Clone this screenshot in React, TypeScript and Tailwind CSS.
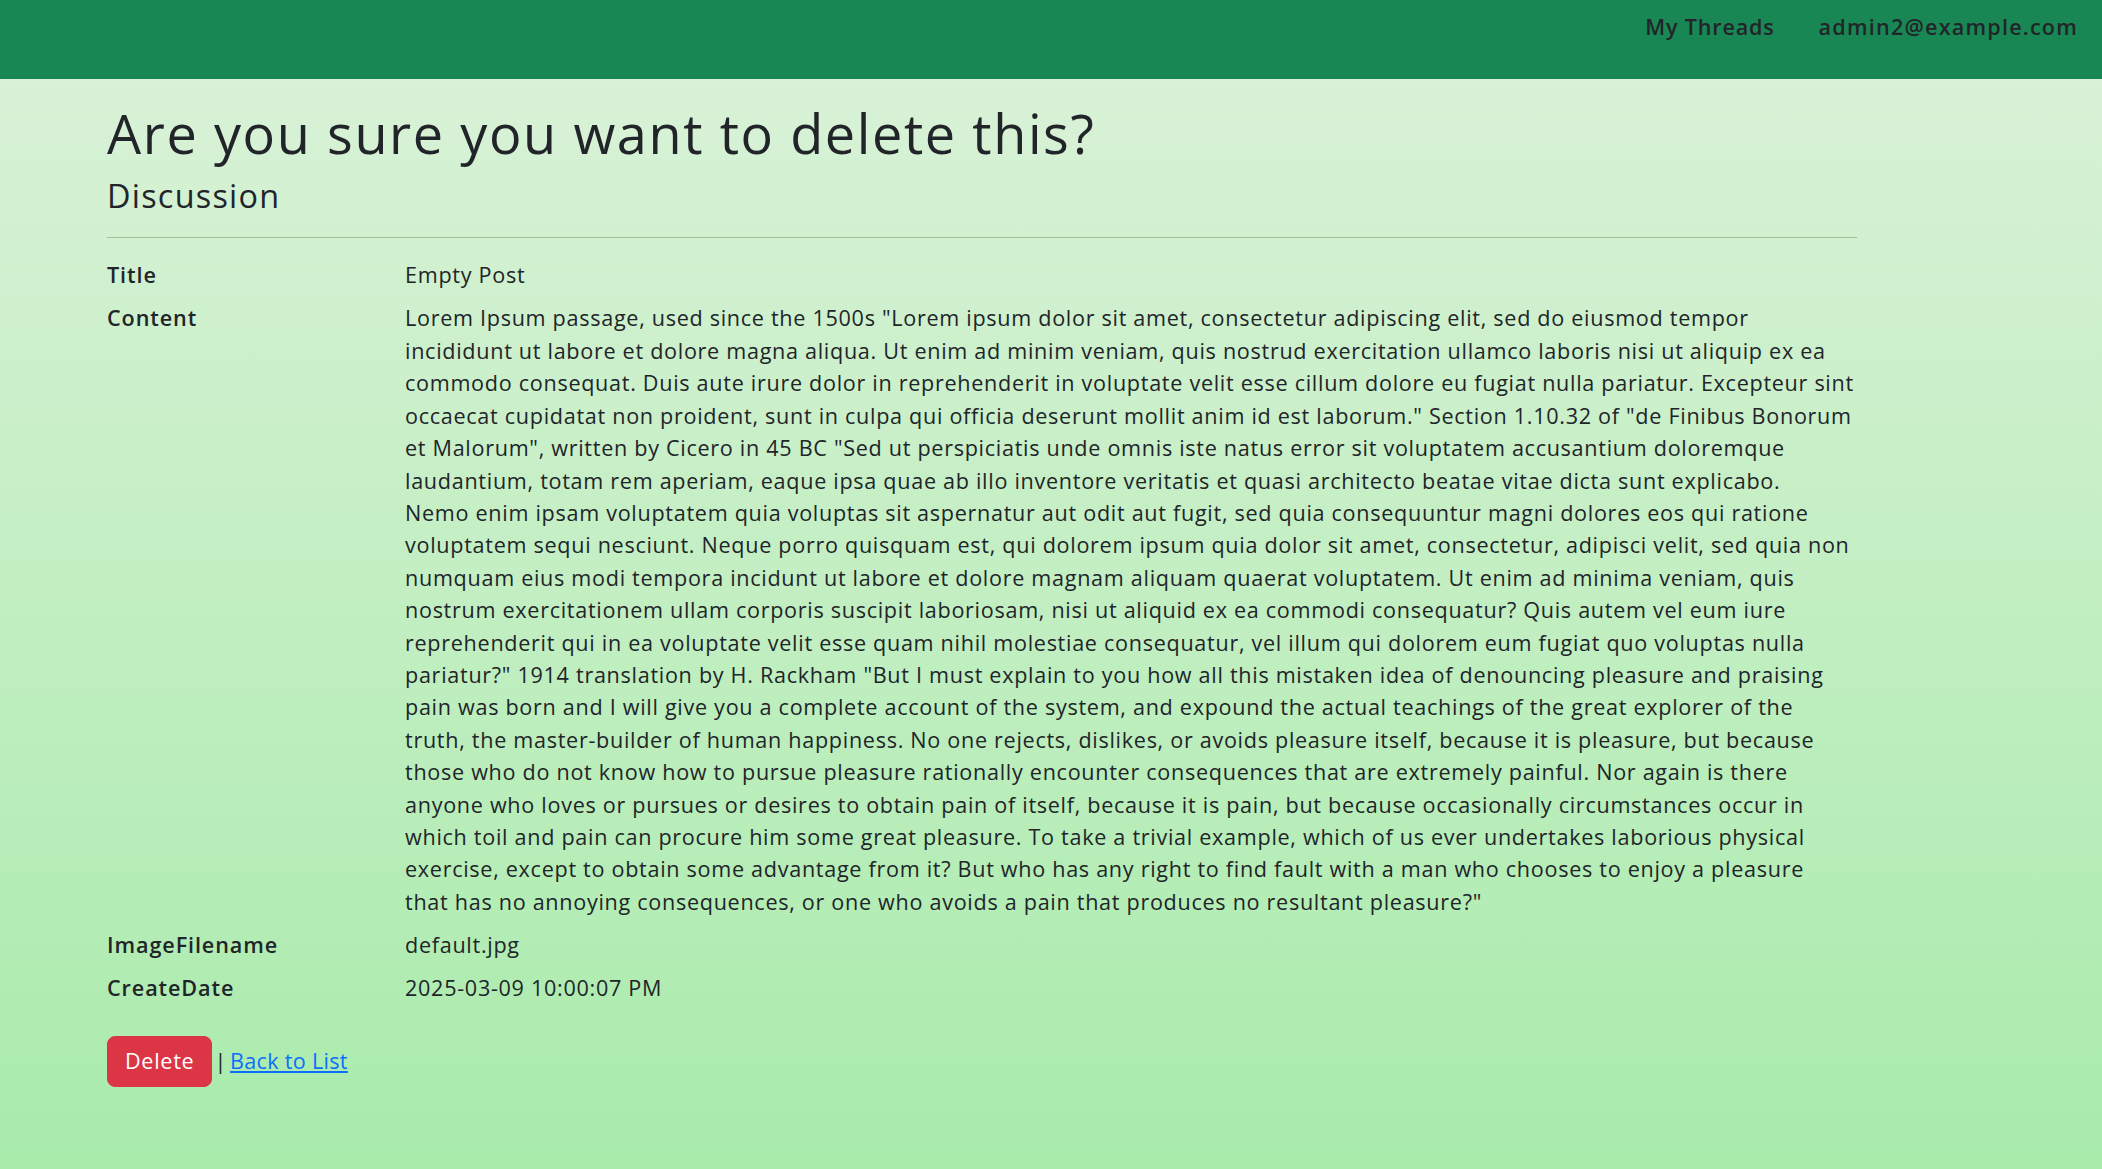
import React from 'react';

const contentLines = [
  'Lorem Ipsum passage, used since the 1500s "Lorem ipsum dolor sit amet, consectetur adipiscing elit, sed do eiusmod tempor',
  'incididunt ut labore et dolore magna aliqua. Ut enim ad minim veniam, quis nostrud exercitation ullamco laboris nisi ut aliquip ex ea',
  'commodo consequat. Duis aute irure dolor in reprehenderit in voluptate velit esse cillum dolore eu fugiat nulla pariatur. Excepteur sint',
  'occaecat cupidatat non proident, sunt in culpa qui officia deserunt mollit anim id est laborum." Section 1.10.32 of "de Finibus Bonorum',
  'et Malorum", written by Cicero in 45 BC "Sed ut perspiciatis unde omnis iste natus error sit voluptatem accusantium doloremque',
  'laudantium, totam rem aperiam, eaque ipsa quae ab illo inventore veritatis et quasi architecto beatae vitae dicta sunt explicabo.',
  'Nemo enim ipsam voluptatem quia voluptas sit aspernatur aut odit aut fugit, sed quia consequuntur magni dolores eos qui ratione',
  'voluptatem sequi nesciunt. Neque porro quisquam est, qui dolorem ipsum quia dolor sit amet, consectetur, adipisci velit, sed quia non',
  'numquam eius modi tempora incidunt ut labore et dolore magnam aliquam quaerat voluptatem. Ut enim ad minima veniam, quis',
  'nostrum exercitationem ullam corporis suscipit laboriosam, nisi ut aliquid ex ea commodi consequatur? Quis autem vel eum iure',
  'reprehenderit qui in ea voluptate velit esse quam nihil molestiae consequatur, vel illum qui dolorem eum fugiat quo voluptas nulla',
  'pariatur?" 1914 translation by H. Rackham "But I must explain to you how all this mistaken idea of denouncing pleasure and praising',
  'pain was born and I will give you a complete account of the system, and expound the actual teachings of the great explorer of the',
  'truth, the master-builder of human happiness. No one rejects, dislikes, or avoids pleasure itself, because it is pleasure, but because',
  'those who do not know how to pursue pleasure rationally encounter consequences that are extremely painful. Nor again is there',
  'anyone who loves or pursues or desires to obtain pain of itself, because it is pain, but because occasionally circumstances occur in',
  'which toil and pain can procure him some great pleasure. To take a trivial example, which of us ever undertakes laborious physical',
  'exercise, except to obtain some advantage from it? But who has any right to find fault with a man who chooses to enjoy a pleasure',
  'that has no annoying consequences, or one who avoids a pain that produces no resultant pleasure?"',
];

const Row = ({ label, children }: { label: string; children: React.ReactNode }) => (
  <div className="flex mb-[10.8px]">
    <dt className="w-[298px] shrink-0 font-semibold tracking-[0.9px]">{label}</dt>
    <dd className="flex-1">{children}</dd>
  </div>
);

const App = () => {
  return (
    <div
      className="min-h-[1169px] bg-gradient-to-b from-[#dcf2da] to-[#a8ebab] text-[#212529] text-[21.6px] leading-[32.4px] tracking-[0.7px]"
      style={{ fontFamily: '"Open Sans", "Liberation Sans", sans-serif' }}
    >
      <nav className="h-[79px] bg-[#198754] flex justify-end items-start pt-[11px] pr-[24px] gap-[44px] font-semibold tracking-[1.2px]">
        <a className="cursor-pointer tracking-[0.8px]">My Threads</a>
        <a className="cursor-pointer">admin2@example.com</a>
      </nav>

      <main className="ml-[107px] w-[1750px] pt-[21.6px]">
        <h1 className="text-[54px] leading-[64.8px] font-normal tracking-[1.6px] mb-[10.8px]">
          Are you sure you want to delete this?
        </h1>
        <h4 className="text-[32.4px] leading-[38.9px] font-normal tracking-[1.25px]">Discussion</h4>
        <hr className="mt-[21.6px] mb-[21.6px] border-t border-[#9fbf9a]" />

        <dl>
          <Row label="Title">Empty Post</Row>
          <Row label="Content">
            {contentLines.map((line, i) => (
              <div key={i} className="whitespace-nowrap">
                {line}
              </div>
            ))}
          </Row>
          <Row label="ImageFilename">default.jpg</Row>
          <Row label="CreateDate">2025-03-09 10:00:07 PM</Row>
        </dl>

        <form className="mt-[31px] flex items-center">
          <button
            type="button"
            className="h-[51px] px-[17px] rounded-[8px] bg-[#dc3545] text-white border border-[#dc3545]"
          >
            Delete
          </button>
          <span className="ml-[2px] mr-[3px]">|</span>
          <a className="text-[#0d6efd] underline cursor-pointer tracking-[0.3px]">Back to List</a>
        </form>
      </main>
    </div>
  );
};

export default App;
